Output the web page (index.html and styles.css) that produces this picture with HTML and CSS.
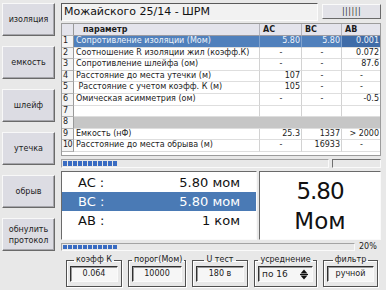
FILE: index.html
```html
<!DOCTYPE html>
<html lang="ru">
<head>
<meta charset="utf-8">
<title>ШРМ</title>
<link rel="stylesheet" href="styles.css">
</head>
<body>
<div class="app">
  <nav class="sidebar">
    <div class="side-btn">изоляция</div>
    <div class="side-btn">емкость</div>
    <div class="side-btn">шлейф</div>
    <div class="side-btn">утечка</div>
    <div class="side-btn">обрыв</div>
    <div class="side-btn">обнулить<br>протокол</div>
  </nav>
  <main class="main">
    <div class="titlebar">
      <div class="title">Можайского 25/14 - ШРМ</div>
      <div class="tbtn">||||||</div>
    </div>
    <div class="grid">
      <div class="row head"><div class="c num"></div><div class="c hp">параметр</div><div class="c">AC</div><div class="c">BC</div><div class="c">AB</div></div>
      <div class="row sel"><div class="c num">1</div><div class="c">Сопротивление изоляции (Мом)</div><div class="c r">5.80</div><div class="c r">5.80</div><div class="c r cur">0.001</div></div>
      <div class="row"><div class="c num">2</div><div class="c">Соотношение R изоляции жил (коэфф.К)</div><div class="c d">-</div><div class="c d">-</div><div class="c r">0.072</div></div>
      <div class="row"><div class="c num">3</div><div class="c">Сопротивление шлейфа (ом)</div><div class="c d">-</div><div class="c d">-</div><div class="c r">87.6</div></div>
      <div class="row"><div class="c num">4</div><div class="c">Расстояние до места утечки (м)</div><div class="c r">107</div><div class="c d">-</div><div class="c d">-</div></div>
      <div class="row"><div class="c num">5</div><div class="c">&nbsp;Расстояние с учетом коэфф. К (м)</div><div class="c r">105</div><div class="c d">-</div><div class="c d">-</div></div>
      <div class="row"><div class="c num">6</div><div class="c">Омическая асимметрия (ом)</div><div class="c d">-</div><div class="c d">-</div><div class="c r">-0.5</div></div>
      <div class="row"><div class="c num">7</div><div class="c"></div><div class="c"></div><div class="c"></div><div class="c"></div></div>
      <div class="row"><div class="c num">8</div><div class="c span"></div></div>
      <div class="row"><div class="c num">9</div><div class="c">Емкость (нФ)</div><div class="c r">25.3</div><div class="c r">1337</div><div class="c r">&gt; 2000</div></div>
      <div class="row"><div class="c num">10</div><div class="c">Расстояние до места обрыва (м)</div><div class="c d">-</div><div class="c r">16933</div><div class="c d">-</div></div>
    </div>
    <div class="prow">
      <div class="pbar">
        <span class="seg"></span><span class="seg"></span><span class="seg"></span><span class="seg"></span><span class="seg"></span><span class="seg"></span><span class="seg"></span><span class="seg"></span><span class="seg"></span><span class="seg"></span><span class="seg"></span>
      </div>
      <div class="pbox"></div>
    </div>
    <div class="readings">
      <div class="vals">
        <div class="vrow"><span>AC :</span><span>5.80 мом</span></div>
        <div class="vrow sel"><span>BC :</span><span>5.80 мом</span></div>
        <div class="vrow"><span>AB :</span><span>1 ком</span></div>
      </div>
      <div class="big">
        <div class="bignum">5.80</div>
        <div>Мом</div>
      </div>
    </div>
    <div class="prow2">
      <div class="pbar">
        <span class="seg"></span><span class="seg"></span><span class="seg"></span><span class="seg"></span><span class="seg"></span><span class="seg"></span><span class="seg"></span><span class="seg"></span><span class="seg"></span><span class="seg"></span><span class="seg"></span>
      </div>
      <div class="pct">20%</div>
    </div>
    <div class="groups">
      <fieldset class="group g1"><legend>коэфф К</legend><div class="field">0.064</div></fieldset>
      <fieldset class="group g2"><legend>порог(Мом)</legend><div class="field">10000</div></fieldset>
      <fieldset class="group g3"><legend>U тест</legend><div class="field">180 в</div></fieldset>
      <fieldset class="group g4"><legend>усреднение</legend><div class="field spin"><span>по 16</span>
        <svg class="arrows" width="8" height="11" viewBox="0 0 8 11"><path d="M4 0.5 L7.5 4.5 L0.5 4.5 Z" fill="#111"/><rect x="0" y="5" width="8" height="1" fill="#111"/><path d="M0.5 6.5 L7.5 6.5 L4 10.5 Z" fill="#111"/></svg>
      </div></fieldset>
      <fieldset class="group g5"><legend>фильтр</legend><div class="field">ручной</div></fieldset>
    </div>
  </main>
</div>
</body>
</html>
```
FILE: styles.css
```css
* { box-sizing: border-box; }
html, body {
  margin: 0;
  padding: 0;
}
body {
  width: 386px;
  height: 290px;
  overflow: hidden;
  background: #e8e8e8;
  font-family: "DejaVu Sans", sans-serif;
  color: #1c1c1c;
}
.app {
  display: flex;
  gap: 6px;
  padding: 3px 5px 0 2px;
}
.sidebar {
  width: 53px;
  display: flex;
  flex-direction: column;
  gap: 10px;
}
.side-btn {
  height: 33px;
  background: #dcdce3;
  border: 1px solid;
  border-color: #f8f8f8 #6a6a6a #6a6a6a #f8f8f8;
  box-shadow: inset -1px -1px 0 #a6a6ac;
  font-size: 8px;
  line-height: 11px;
  display: flex;
  align-items: center;
  justify-content: center;
  text-align: center;
  color: #222;
}
.main {
  width: 320px;
  display: flex;
  flex-direction: column;
}
.titlebar {
  display: flex;
  gap: 4px;
  height: 18px;
}
.title {
  flex: 1;
  background: #f2f2f2;
  border: 1px solid;
  border-color: #5a5a5a #fcfcfc #fcfcfc #5a5a5a;
  font-size: 11px;
  line-height: 15px;
  padding-left: 2px;
  color: #111;
}
.tbtn {
  width: 59px;
  height: 15px;
  margin-top: 1px;
  background: #e2e2e8;
  border: 1px solid;
  border-color: #fafafa #6a6a6a #6a6a6a #fafafa;
  font-size: 8px;
  line-height: 13px;
  text-align: center;
  letter-spacing: 0.5px;
  color: #333;
}
.grid {
  margin-top: 2px;
  height: 133px;
  background: #fff;
  border: 1px solid #9c9c9c;
  font-size: 8px;
}
.row {
  display: grid;
  grid-template-columns: 12px 186px 42px 40px 1fr;
  height: 11.6px;
}
.row.head {
  height: 12px;
  background: #e4e4ec;
  font-weight: bold;
}
.c {
  border-right: 1px solid #d2d2d2;
  border-bottom: 1px solid #dedede;
  padding: 0 1px 0 2px;
  white-space: nowrap;
  overflow: hidden;
  line-height: 10.6px;
}
.head .c {
  border-right: 1px solid #b4b4bc;
  border-bottom: 1px solid #9a9aa2;
  line-height: 11px;
  padding-left: 3px;
}
.head .hp { padding-left: 9px; }
.c:last-child { border-right: none; }
.c.num {
  background: #f4f4f4;
  border-right: 1px solid #9a9a9a;
  border-bottom: 1px solid #b4b4b4;
  padding: 0;
  padding-left: 1px;
  letter-spacing: -0.5px;
}
.head .c.num { background: #e4e4ec; }
.r { text-align: right; }
.d { text-align: center; }
.sel .c:not(.num) {
  background: #5080bc;
  color: #eef3fa;
  border-right-color: #7ea2cf;
}
.sel .c.cur { background: #3f6ca8; }
.c.span {
  grid-column: 2 / 6;
  background: #c6c6c6;
  border-right: none;
}
.prow {
  display: flex;
  gap: 3px;
  margin-top: 3px;
  height: 9px;
}
.pbar {
  flex: 1;
  display: flex;
  gap: 1px;
  padding: 1px;
  background: #e8e8e8;
  border: 1px solid;
  border-color: #a4a4a4 #fafafa #fafafa #a4a4a4;
}
.seg {
  width: 4px;
  background: #3a6cc2;
}
.pbox {
  width: 49px;
  border: 1px solid;
  border-color: #707070 #fafafa #fafafa #707070;
}
.readings {
  display: flex;
  gap: 2px;
  margin-top: 3px;
  height: 69px;
}
.vals {
  width: 196px;
  background: #fff;
  border: 1px solid;
  border-color: #6a6a6a #fafafa #fafafa #6a6a6a;
  padding-top: 1px;
}
.vrow {
  height: 19px;
  display: flex;
  justify-content: space-between;
  align-items: center;
  padding: 0 16px 0 16px;
  font-size: 13px;
  color: #111;
}
.vrow.sel {
  background: #4a7ab5;
  color: #fff;
}
.big {
  flex: 1;
  background: #fff;
  border: 1px solid;
  border-color: #6a6a6a #fafafa #fafafa #6a6a6a;
  display: flex;
  flex-direction: column;
  align-items: center;
  justify-content: center;
  font-size: 23px;
  line-height: 30px;
  color: #111;
}
.bignum { letter-spacing: -1px; }
.prow2 {
  display: flex;
  align-items: center;
  gap: 4px;
  margin-top: 3px;
  height: 8px;
}
.prow2 .pbar {
  height: 8px;
  padding: 1px;
}
.pct {
  width: 22px;
  font-size: 8px;
  line-height: 8px;
  color: #222;
}
.groups {
  display: flex;
  gap: 6px;
  margin-top: 4px;
  padding-left: 5px;
}
.group {
  margin: 0;
  padding: 0 3px 4px 3px;
  height: 32px;
  border: 1px solid #505050;
  box-shadow: inset 1px 1px 0 #fff, 1px 1px 0 #fff;
  min-width: 0;
}
.group legend {
  margin: 0 auto;
  padding: 0 2px;
  font-size: 8px;
  line-height: 10px;
  color: #222;
}
.g1 { width: 56px; }
.g2 { width: 58px; }
.g3 { width: 56px; }
.g4 { width: 63px; }
.g5 { width: 55px; }
.field {
  height: 16px;
  margin-top: 1px;
  background: #f6f6f6;
  border: 1px solid;
  border-color: #303030 #fafafa #fafafa #303030;
  box-shadow: inset 1px 1px 0 #9a9a9a;
  font-size: 8px;
  line-height: 14px;
  text-align: center;
  color: #222;
}
.field.spin {
  display: flex;
  align-items: center;
  justify-content: space-between;
  padding: 0 4px 0 3px;
  text-align: left;
  font-size: 9px;
}
.arrows { display: block; }
```
